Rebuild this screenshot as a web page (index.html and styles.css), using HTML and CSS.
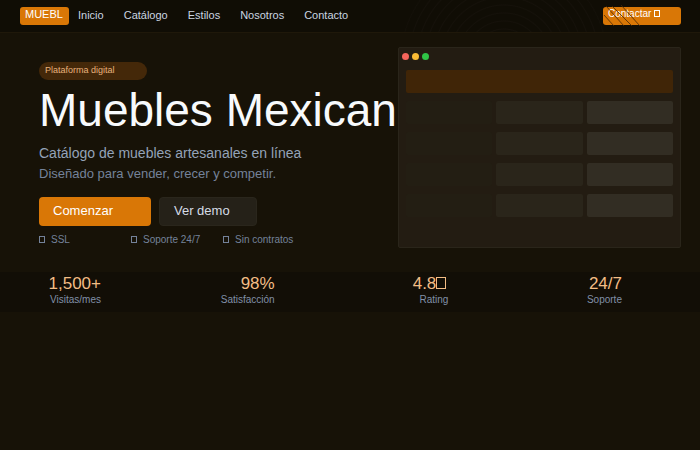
FILE: index.html
```html
<!DOCTYPE html>
<html lang="es">

<head>
    <meta charset="UTF-8">
    <meta name="viewport" content="width=device-width, initial-scale=1.0">
    <title>Muebles Mexicanos</title>
    <link rel="stylesheet" href="styles.css">
</head>

<body>

    <header class="topbar">
        <a class="logo" href="#">MUEBL</a>
        <nav class="menu">
            <a href="#">Inicio</a>
            <a href="#">Catálogo</a>
            <a href="#">Estilos</a>
            <a href="#">Nosotros</a>
            <a href="#">Contacto</a>
        </nav>
        <button class="btn-contact" type="button">
            Contactar <span class="box"></span>
            <!-- rayas decorativas -->
            <svg class="stripes" width="40" height="26" viewBox="0 0 40 26">
                <path d="M1 12L11 23M3 3L21 23M9 3L29 23M18 2L37 23" />
            </svg>
        </button>
    </header>

    <main class="hero">
        <section class="intro">
            <span class="tag">Plataforma digital</span>
            <h1>Muebles Mexican</h1>
            <p class="lead">Catálogo de muebles artesanales en línea</p>
            <p class="sub">Diseñado para vender, crecer y competir.</p>
            <div class="actions">
                <button class="btn btn-main" type="button">Comenzar</button>
                <button class="btn btn-demo" type="button">Ver demo</button>
            </div>
            <ul class="features">
                <li><span class="box"></span>SSL</li>
                <li><span class="box"></span>Soporte 24/7</li>
                <li><span class="box"></span>Sin contratos</li>
            </ul>
        </section>

        <!-- ventana de ejemplo -->
        <section class="window">
            <div class="dots">
                <span class="dot red"></span>
                <span class="dot yellow"></span>
                <span class="dot green"></span>
            </div>
            <div class="banner"></div>
            <div class="cells">
                <div></div><div></div><div></div>
                <div></div><div></div><div></div>
                <div></div><div></div><div></div>
                <div></div><div></div><div></div>
            </div>
        </section>
    </main>

    <section class="stats">
        <div class="stat"><strong>1,500+</strong><span>Visitas/mes</span></div>
        <div class="stat"><strong>98%</strong><span>Satisfacción</span></div>
        <div class="stat"><strong>4.8<i class="box big"></i></strong><span>Rating</span></div>
        <div class="stat"><strong>24/7</strong><span>Soporte</span></div>
    </section>

</body>

</html>
```
FILE: styles.css
```css
* {
    box-sizing: border-box;
}

body {
    margin: 0;
    min-height: 100vh;
    background-color: #171207;
    color: #94a3b8;
    font-family: "Liberation Sans", Arial, sans-serif;
}

a {
    color: inherit;
    text-decoration: none;
}

button {
    font-family: inherit;
    text-align: left;
    cursor: pointer;
}

/* cuadrito usado como icono */
.box {
    display: inline-block;
    width: 6px;
    height: 7px;
    border: 1px solid currentColor;
}

.box.big {
    width: 10px;
    height: 12px;
    margin-right: 2px;
}

/* barra superior */
.topbar {
    display: flex;
    align-items: center;
    height: 33px;
    padding: 0 19px 0 20px;
    background-color: #100d05;
    background-image: radial-gradient(circle at 72% 60px, transparent 100px, #100d05 110px),
        repeating-radial-gradient(circle at 72% 60px, #100d05 0, #100d05 6px, #15110a 7px, #100d05 8px);
    border-bottom: 1px solid #1f180a;
}

.logo {
    width: 49px;
    height: 18px;
    padding-left: 5px;
    border-radius: 3px;
    background-color: #d97706;
    color: #fff;
    font-size: 11px;
    line-height: 15px;
}

.menu {
    display: flex;
    flex: 1;
    gap: 20px;
    margin-left: 9px;
    padding-bottom: 2px;
    color: #cbd5e1;
    font-size: 11px;
    line-height: 16px;
}

.btn-contact {
    position: relative;
    width: 78px;
    height: 18px;
    padding: 0 0 4px 5px;
    border: none;
    border-radius: 3px;
    background-color: #d97706;
    color: #fff;
    font-size: 10px;
    line-height: 14px;
}

.stripes {
    position: absolute;
    top: -4px;
    left: 0;
    fill: none;
    stroke: #4a2a06;
    stroke-width: 1;
    opacity: 0.8;
}

/* portada */
.hero {
    display: flex;
    padding: 14px 19px 24px 39px;
}

.intro {
    flex: 1;
    min-width: 0;
    padding-top: 15px;
}

.tag {
    display: block;
    width: 108px;
    height: 18px;
    padding-left: 6px;
    border-radius: 9px;
    background-color: #442809;
    color: #e8b27c;
    font-size: 9px;
    line-height: 17px;
}

h1 {
    margin: 3px 0 0;
    color: #f8fafc;
    font-size: 46px;
    font-weight: normal;
    line-height: 54px;
    white-space: nowrap;
}

.lead,
.sub {
    margin: 0;
    white-space: nowrap;
}

.lead {
    margin-top: 5px;
    color: #94a3b8;
    font-size: 14px;
    line-height: 22px;
}

.sub {
    color: #74829a;
    font-size: 13px;
    line-height: 20px;
}

.actions {
    display: flex;
    gap: 8px;
    margin-top: 13px;
}

.btn {
    height: 29px;
    padding: 0 0 2px 14px;
    border: none;
    border-radius: 4px;
    font-size: 13px;
}

.btn-main {
    width: 112px;
    background-color: #d97706;
    color: #fff;
}

.btn-demo {
    width: 98px;
    border: 1px solid #2a261c;
    background-color: #252118;
    color: #d5dce6;
}

.features {
    display: grid;
    grid-template-columns: repeat(3, 92px);
    margin: 8px 0 0;
    padding: 0;
    color: #74829a;
    font-size: 10px;
    line-height: 12px;
    list-style: none;
    white-space: nowrap;
}

.features .box {
    margin-right: 6px;
}

/* ventana */
.window {
    width: 45%;
    max-width: 283px;
    height: 201px;
    padding: 5px 7px;
    border: 1px solid #2a251a;
    border-radius: 2px;
    background-color: #231c12;
}

.dots {
    display: flex;
    gap: 3px;
    margin-left: -4px;
}

.dot {
    width: 7px;
    height: 7px;
    border-radius: 50%;
}

.red {
    background-color: #f5655b;
}

.yellow {
    background-color: #fbbc35;
}

.green {
    background-color: #2fc446;
}

.banner {
    height: 23px;
    margin: 10px 0 8px;
    border-radius: 2px;
    background-color: #402507;
}

.cells {
    display: grid;
    grid-template-columns: repeat(3, 1fr);
    gap: 8px 4px;
}

.cells div {
    height: 23px;
    border-radius: 2px;
    background-color: #231e13;
}

.cells div:nth-child(3n + 2) {
    background-color: #2a251a;
}

.cells div:nth-child(3n) {
    background-color: #322d23;
}

/* cifras */
.stats {
    display: flex;
    justify-content: space-between;
    padding: 2px 78px 6px 39px;
    background-color: #120e06;
    text-align: right;
}

.stat {
    width: 62px;
}

.stat strong,
.stat span {
    display: block;
}

.stat strong {
    color: #f3bd85;
    font-size: 17px;
    font-weight: normal;
    line-height: 20px;
}

.stat span {
    color: #8190a8;
    font-size: 10px;
    line-height: 12px;
}
```
